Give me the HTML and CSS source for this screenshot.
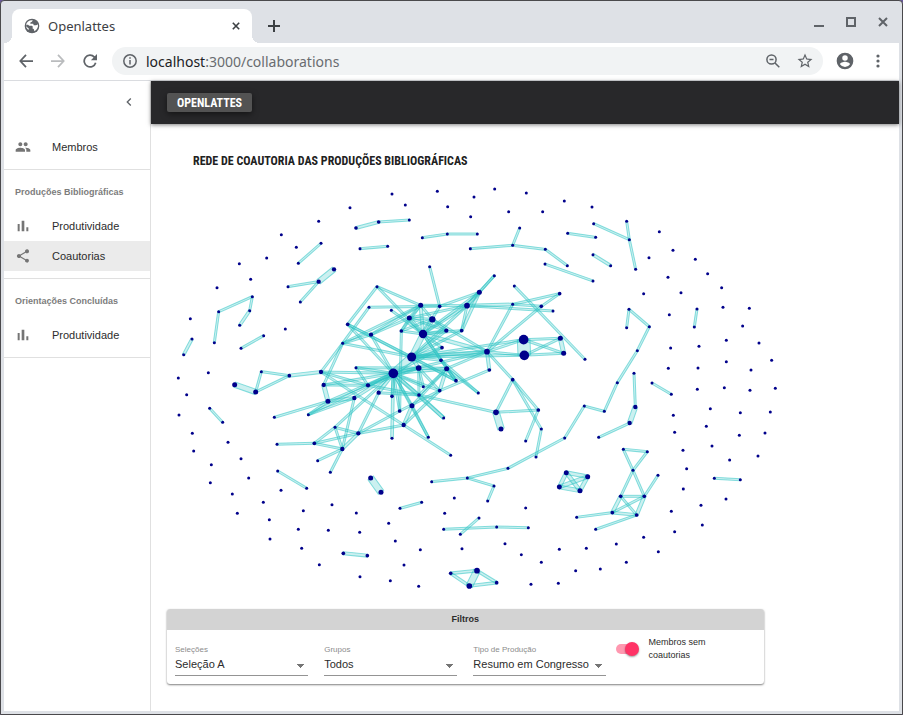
FILE: index.html
```html
<!DOCTYPE html>
<html lang="pt-BR">
<head>
<meta charset="utf-8">
<title>Openlattes</title>
<link rel="stylesheet" href="styles.css">
</head>
<body>
<div class="window">
  <div class="tabstrip">
    <div class="tab">
      <svg class="globe" viewBox="0 0 24 24"><circle cx="12" cy="12" r="11" fill="#5f6368"/><path fill="#fff" d="M13 3.500c-.5 1.500-.5 2-2 2.500-1.500.4-1.500 1-1.500 2.500h3.500c1 0 1.500 1 1.500 2.500h3c1.500 0 2.500-.5 3.400-1.500.8 4.500-1.400 8.500-5.400 10.200l-.5-2.200c0-1-.8-1.500-2-1.500v-3c0-1-.8-1.500-1.800-1.500H8.500c-1 0-1.500-1-2.500-1.500H3.300c-.1 1 0 2 .3 3l3.400 2.500v2.500C5 17 2.500 14 3 10.500 3.800 6 8 3 13 3.500z"/></svg>
      <span class="tab-title">Openlattes</span>
      <button class="icon-btn tab-close" aria-label="Fechar aba"><svg viewBox="0 0 10 10"><path d="M1 1l8 8M9 1L1 9"/></svg></button>
    </div>
    <button class="icon-btn new-tab" aria-label="Nova aba"><svg viewBox="0 0 12 12"><path d="M6 0v12M0 6h12"/></svg></button>
    <div class="window-controls">
      <button class="icon-btn" aria-label="Minimizar"><svg viewBox="0 0 12 12"><path d="M1 10h10"/></svg></button>
      <button class="icon-btn" aria-label="Maximizar"><svg viewBox="0 0 12 12"><path d="M2 2h8v8H2z"/></svg></button>
      <button class="icon-btn" aria-label="Fechar"><svg viewBox="0 0 12 12"><path d="M2 2l8 8M10 2l-8 8"/></svg></button>
    </div>
  </div>
  <div class="toolbar">
    <button class="icon-btn nav" aria-label="Voltar"><svg viewBox="0 0 16 16"><path d="M16 8H2M8 1L1.500 8 8 15"/></svg></button>
    <button class="icon-btn nav nav-off" aria-label="Avançar"><svg viewBox="0 0 16 16"><path d="M0 8h14M8 1l6.500 7L8 15"/></svg></button>
    <button class="icon-btn nav" aria-label="Recarregar"><svg viewBox="0 0 16 16"><path d="M14.500 10A6.700 6.700 0 1 1 13 3.500L14 5"/><path class="solid" d="M16 0v7H9z"/></svg></button>
    <div class="omnibox">
      <svg class="info" viewBox="0 0 14 14"><circle cx="7" cy="7" r="6.200"/><path d="M7 6v4.500M7 3.300v1.500"/></svg>
      <span class="url"><b>localhost</b>:3000/collaborations</span>
      <button class="icon-btn lens" aria-label="Zoom"><svg viewBox="0 0 14 14"><circle cx="5.500" cy="5.500" r="4.600"/><path d="M3.500 5.500h4M9 9l4.300 4.300"/></svg></button>
      <button class="icon-btn star" aria-label="Favoritar"><svg viewBox="0 0 24 24"><path class="solid" d="M22 9.240l-7.190-.62L12 2 9.190 8.630 2 9.240l5.460 4.730L5.820 21 12 17.270 18.180 21l-1.630-7.030L22 9.240zM12 15.400l-3.760 2.270 1-4.280-3.320-2.880 4.380-.38L12 6.100l1.710 4.040 4.380.38-3.320 2.880 1 4.280L12 15.400z"/></svg></button>
    </div>
    <button class="icon-btn person" aria-label="Perfil"><svg viewBox="0 0 24 24"><path class="solid" d="M12 2a10 10 0 1 0 0 20 10 10 0 0 0 0-20zm0 3a3.300 3.300 0 1 1 0 6.600A3.300 3.300 0 0 1 12 5zm0 14.200a7.200 7.200 0 0 1-6-3.200c0-2 4-3.100 6-3.100s6 1.100 6 3.100a7.200 7.200 0 0 1-6 3.200z"/></svg></button>
    <button class="icon-btn more" aria-label="Menu"><svg viewBox="0 0 4 14"><circle class="solid" cx="2" cy="2" r="1.600"/><circle class="solid" cx="2" cy="7" r="1.600"/><circle class="solid" cx="2" cy="12" r="1.600"/></svg></button>
  </div>
  <div class="app">
    <nav class="sidebar">
      <div class="collapse"><button class="icon-btn" aria-label="Recolher menu"><svg viewBox="0 0 24 24"><path class="solid" d="M15.410 7.410L14 6l-6 6 6 6 1.410-1.410L10.830 12z"/></svg></button></div>
      <div class="group first">
        <a class="item" href="#membros"><svg viewBox="0 0 24 24"><path d="M16 11c1.660 0 2.990-1.340 2.990-3S17.660 5 16 5s-3 1.340-3 3 1.340 3 3 3zm-8 0c1.660 0 2.990-1.340 2.990-3S9.660 5 8 5 5 6.340 5 8s1.340 3 3 3zm0 2c-2.330 0-7 1.170-7 3.500V19h14v-2.500C15 14.170 10.330 13 8 13zm8 0c-.29 0-.62.020-.97.050 1.160.84 1.970 1.970 1.970 3.450V19h6v-2.500c0-2.330-4.670-3.500-7-3.500z"/></svg>Membros</a>
      </div>
      <div class="group">
        <h2>Produções Bibliográficas</h2>
        <a class="item" href="#produtividade"><svg viewBox="0 0 24 24"><path d="M4 9h3v11H4zM10 4h4v16h-4zM17 14h3v6h-3z"/></svg>Produtividade</a>
        <a class="item active" href="#coautorias"><svg viewBox="0 0 24 24"><path d="M18 16.080c-.76 0-1.440.3-1.960.77L8.910 12.700a3.300 3.300 0 0 0 0-1.400l7.050-4.110A3 3 0 1 0 15.090 5.700L8.040 9.810a3 3 0 1 0 0 4.380l7.120 4.160A2.920 2.920 0 1 0 18 16.080z"/></svg>Coautorias</a>
      </div>
      <div class="group">
        <h2>Orientações Concluídas</h2>
        <a class="item" href="#orientacoes"><svg viewBox="0 0 24 24"><path d="M4 9h3v11H4zM10 4h4v16h-4zM17 14h3v6h-3z"/></svg>Produtividade</a>
      </div>
    </nav>
    <div class="page">
      <header class="appbar"><a class="brand" href="#inicio">OPENLATTES</a></header>
      <main class="content">
        <h1>REDE DE COAUTORIA DAS PRODUÇÕES BIBLIOGRÁFICAS</h1>
        <svg id="network" class="network" viewBox="-9 0 1790 1230" role="img" aria-label="Rede de coautoria"></svg>
        <section class="card">
          <h3>Filtros</h3>
          <form class="filters">
            <div class="field"><label for="selecao">Seleções</label><select id="selecao"><option>Seleção A</option></select></div>
            <div class="field"><label for="grupo">Grupos</label><select id="grupo"><option>Todos</option></select></div>
            <div class="field"><label for="tipo">Tipo de Produção</label><select id="tipo"><option>Resumo em Congresso</option></select></div>
            <div class="switch"><input type="checkbox" id="sem" checked><label for="sem">Membros sem coautorias</label></div>
          </form>
        </section>
      </main>
    </div>
  </div>
</div>
<script src="network.js"></script>
</body>
</html>
```
FILE: styles.css
```css
* { box-sizing: border-box; }

body {
  margin: 0;
  background: #6a5a9c;
  color: #2c2c2c;
  font-family: "Liberation Sans", Arial, sans-serif;
  font-size: 11px;
}

h1, h2, h3 { margin: 0; }
a { color: inherit; text-decoration: none; }

.window {
  display: flex;
  flex-direction: column;
  min-height: 100vh;
  padding: 0 3px 3px;
  border: 1px solid #4a494c;
  border-radius: 4px 4px 0 0;
  background: #dee1e6;
}

.icon-btn {
  display: flex;
  flex: none;
  align-items: center;
  justify-content: center;
  padding: 0;
  border: 0;
  background: none;
  color: #5f6368;
}

.icon-btn svg, .info {
  display: block;
  width: 100%;
  fill: none;
  stroke: currentColor;
  stroke-width: 2;
}

.icon-btn .solid { fill: currentColor; stroke: none; }

/* Browser tabs */
.tabstrip {
  display: flex;
  align-items: center;
  height: 42px;
  padding: 8px 6px 0 8px;
}

.tab {
  position: relative;
  display: flex;
  align-items: center;
  width: 240px;
  height: 34px;
  padding: 0 12px;
  border-radius: 8px 8px 0 0;
  background: #fff;
}

.tab::before, .tab::after {
  content: "";
  position: absolute;
  bottom: 0;
  width: 8px;
  height: 8px;
}

.tab::before { left: -8px; background: radial-gradient(circle at 0 0, #dee1e6 8px, #fff 8px); }
.tab::after { right: -8px; background: radial-gradient(circle at 100% 0, #dee1e6 8px, #fff 8px); }

.globe { width: 16px; height: 16px; }

.tab-title {
  flex: 1;
  padding-left: 8px;
  color: #3c4043;
  font: 13px "Noto Sans", sans-serif;
}

.tab-close { width: 8px; color: #3c4043; }
.new-tab { width: 12px; margin-left: 16px; color: #3c4043; }

.window-controls {
  display: flex;
  gap: 20px;
  margin: 0 4px 8px auto;
}

.window-controls .icon-btn { width: 12px; }

/* Browser toolbar */
.toolbar {
  display: flex;
  align-items: center;
  height: 38px;
  padding: 0 16px 1px 15px;
  border-bottom: 1px solid #dadce0;
  background: #fff;
}

.nav { width: 14px; margin-right: 18px; }
.nav-off { color: #babcbe; }

.omnibox {
  display: flex;
  flex: 1;
  align-items: center;
  height: 28px;
  margin-right: 12px;
  margin-left: -3px;
  padding: 0 9px 0 11px;
  border-radius: 14px;
  background: #f1f3f4;
}

.info { width: 14px; height: 14px; color: #5f6368; stroke-width: 1.5; }
.lens svg { stroke-width: 1.5; }

.url {
  flex: 1;
  padding-left: 9px;
  color: #696c70;
  font: 14px "Noto Sans", sans-serif;
}

.url b { color: #202124; font-weight: 400; }
.lens { width: 14px; }
.star { width: 18px; margin-left: 16px; }
.person { width: 20px; margin-right: 21px; }
.more { width: 4px; margin-right: 3px; }

/* Application */
.app {
  display: flex;
  flex: 1;
  background: #fff;
}

.sidebar {
  flex: none;
  width: 147px;
  border-right: 1px solid #e0e0e0;
}

.collapse {
  display: flex;
  align-items: center;
  justify-content: flex-end;
  height: 44px;
  padding: 0 13px 2px 0;
}

.collapse .icon-btn { width: 16px; }

.group {
  padding-bottom: 7px;
  border-bottom: 1px solid #e0e0e0;
}

.group.first { padding-top: 7px; }

.group h2 {
  height: 41px;
  padding: 4px 0 0 11px;
  color: #7c7c7c;
  font-size: 9px;
  line-height: 36px;
}

.item {
  display: flex;
  align-items: center;
  height: 30px;
  padding-left: 11px;
}

.item svg {
  width: 16px;
  height: 16px;
  margin-right: 21px;
  fill: #757575;
}

.active { background: #ebebeb; }

.page { flex: 1; min-width: 0; }

.appbar {
  display: flex;
  align-items: center;
  height: 43px;
  padding: 0 16px;
  background: #28282a;
  box-shadow: 0 1px 4px rgba(0, 0, 0, .5);
}

.brand {
  padding: 1px 10px 0;
  border-radius: 2px;
  background: #535353;
  box-shadow: 0 2px 6px rgba(0, 0, 0, .5);
  color: #fff;
  font: bold 12px/18px "Roboto Condensed", "Liberation Sans Narrow", Roboto, sans-serif;
}

.content {
  width: calc((100% - 32px) * 10 / 12);
  margin-left: 16px;
  padding: 27px 0 26px;
}

.content h1 {
  padding-left: 26px;
  color: #212121;
  font: bold 12px/20px "Roboto Condensed", "Liberation Sans Narrow", Roboto, sans-serif;
  white-space: nowrap;
}

.network {
  display: block;
  width: 100%;
  margin: 9px 0 19px;
  overflow: visible;
}

.edge {
  fill: rgba(47, 196, 196, .25);
  stroke: rgba(47, 196, 196, .55);
  stroke-width: 3px;
}

.node { fill: #00008b; }

/* Filters */
.card {
  overflow: hidden;
  border-radius: 3px;
  box-shadow: 0 1px 2px rgba(0, 0, 0, .5);
}

.card h3 {
  background: #d3d3d3;
  font-size: 9px;
  line-height: 21px;
  text-align: center;
}

.filters {
  display: grid;
  grid-template-columns: repeat(4, 1fr);
  padding-bottom: 8px;
}

.field { padding: 14px 8px 0; }

.field label {
  display: block;
  color: #8c8c8c;
  font-size: 8px;
  line-height: 12px;
}

.field select {
  width: 100%;
  height: 20px;
  padding: 0 0 2px;
  border: 0;
  border-bottom: 1px solid #949494;
  border-radius: 0;
  appearance: none;
  background:
    linear-gradient(to bottom left, #757575 50%, transparent 51%) right 7px top 8px / 4px 4px no-repeat,
    linear-gradient(to bottom right, #757575 50%, transparent 51%) right 4px top 8px / 4px 4px no-repeat;
  color: #2c2c2c;
  font: 11px "Liberation Sans", Arial, sans-serif;
}

.switch {
  display: flex;
  align-items: flex-start;
  padding: 6px 32px 0 2px;
}

.switch input {
  position: relative;
  flex: none;
  width: 20px;
  height: 10px;
  margin: 8px 12px 0 0;
  border-radius: 5px;
  appearance: none;
  background: #ff98b0;
}

.switch input::after {
  content: "";
  position: absolute;
  top: -2px;
  right: -3px;
  width: 14px;
  height: 14px;
  border-radius: 50%;
  background: #ff3366;
  box-shadow: 0 1px 2px rgba(0, 0, 0, .4);
}

.switch label { font-size: 9px; line-height: 13px; }
```
FILE: network.js
```js
// Members without co-authors: x,y pairs.
const isolated = `540,83 446,124 334,164 379,202 290,234 208,251 242,298 141,323 61,416 346,447 115,578 25,594
666,42 802,34 706,75 912,51 833,80 974,27 1069,39 1183,63 902,110 1016,95 1118,95
1266,81 1468,155 1509,211 1437,233 1576,238 1494,292 1613,281 1655,323 1421,341 1533,338 1498,404 1659,382 1738,385 1718,438 1502,504 1587,499 1669,481 1767,489 1805,541 1669,545 1495,565 1584,564 1743,570 1582,628 1663,623 1740,631 1816,625
50,644 27,705 67,760 174,787 71,813 213,836 124,854 236,894 121,908 187,942 333,931 280,967 202,1000 298,1019 400,992 486,974 559,999 385,1048 475,1051 569,1057 300,1077 395,1105 448,1154 570,1190
853,954 824,1000 1067,984 656,1030 676,1083 751,1109 876,1106 1005,1091 1054,1124 702,1155 661,1202 746,1219 1114,1147 1168,1108 1217,1172 1083,1213 1165,1210
1510,706 1621,686 1711,698 1801,696 1514,757 1609,739 1708,766 1785,759 1539,811 1626,798 1679,840 1764,828 1550,866 1540,927 1668,957 1593,976 1504,994 1597,1035 1514,1055 1421,1072 1339,1092 1249,1105 1465,1115 1369,1147 1291,1167`;

// Members with co-authors: id:x,y[,radius].
const linked = `a1:453,190 a2:385,250 a3:492,268,6 a4:446,305,6 a5:354,320 a6:391,366
b1:247,350 b2:146,395 b3:133,488 b4:239,392 b5:209,436 c1:66,477 c2:41,524 d1:281,467 d2:213,505
e1:274,575 e2:358,587,5 e3:453,576,6 e4:194,614,7 e5:257,636,7
f1:558,144,5 f2:626,126,5 f3:718,120 g1:570,206 g2:653,199 h1:757,173 h2:832,162 h3:922,162
i1:901,206 i2:1028,196 i3:1049,144 i4:1126,208 i5:1192,257 j1:1125,252 j2:1269,303 k1:1193,160 k2:1277,172
l1:1271,131 l2:1378,179 l3:1370,124 l4:1397,268 m1:1269,224 m2:1322,257 n1:1581,387 n2:1573,441
o1:1370,443 o2:1377,388 o3:1438,440 o4:1402,512 o5:1342,608 o6:1303,694 o7:1243,678 o8:1184,774 o9:1014,865 o10:892,894 o11:785,905 o12:972,918 o13:953,963
p1:1392,580 p2:1396,681,6 p3:1379,729,6 p4:1286,772 q1:1446,609 q2:1504,643 r1:119,685 r2:158,727
t1:323,873 t2:410,925 u1:602,894,7 u2:633,937,7 v1:690,985 v2:755,967
w1:821,1048 w2:980,1041 w3:1075,1043 x1:927,1014 x2:871,1063
y1:842,1180,5 y2:921,1172,8 y3:898,1218,8 y4:980,1208,5 z1:520,1120,5 z2:592,1127,5
A1:1360,808 A2:1432,815 A3:1389,871 A4:1352,949,5 A5:1423,949,5 A6:1464,886 A7:1327,998,5 A8:1400,1005,5 A9:1220,1012 A10:1277,1048
B1:1189,878,7 B2:1168,921,7 B3:1230,932,7 B4:1253,890,7 C1:1633,895 C2:1711,899
K1:621,320 K2:779,260 K3:973,287 K4:928,337,7 K5:891,377,8 K6:752,376,7 K7:809,379,5 K8:597,382 K9:664,391 K10:718,414,7 K11:787,418,9 K12:694,453,5 K13:759,462,12 K14:829,452,6 K15:875,452,5
K16:533,433,5 K17:603,464,6 K18:518,490 K19:816,503,5 K20:725,531,13 K21:813,541,5 K22:746,564,8 K23:830,566,7 K24:670,580,14 K25:951,515,8 K26:958,570,5 K27:858,602,5 K28:760,620 K29:809,632,5
K30:1033,318 K31:1169,341,5 K32:1114,379,5 K33:1028,373 K34:1149,393 K35:1061,479,14 K36:1063,526,14 K37:1171,475,7 K38:1181,520,7 K39:1028,599,5 K40:1245,538
K41:558,563 K42:461,615,6 K43:594,616,6 K44:474,664,7 K45:553,654,6 K46:415,704 K47:313,712 K48:495,742 K49:565,760,6 K50:433,790,5 K51:517,807,6 K52:321,793 K53:443,842 K54:481,877
K55:626,638,6 K56:666,649,5 K57:747,645,5 K58:689,693,5 K59:726,677,7 K60:701,735,6 K61:821,714 K62:775,772 K63:666,775 K64:842,826 K65:925,639 K66:978,697,8 K67:993,747,7 K68:1105,690,5 K69:1114,747 K70:1067,783 K71:1098,831`;

// Collaborations: from-to[:width].
const edges = `a1-a2 a3-a4:16 a4-a5 a4-a6 b1-b2 b2-b3 b1-b4 b4-b5:8 c1-c2:8 d1-d2 e1-e2 e2-e3:9 e1-e5 e2-e5 e4-e5:16
f1-f2:8 f2-f3 g1-g2 h1-h2 h2-h3 i1-i2 i2-i3 i2-i4 i4-i5 j1-j2 k1-k2 l1-l2 l2-l3 l2-l4 m1-m2:8 n1-n2
o1-o2 o2-o3 o3-o4 o4-o5 o5-o6 o6-o7 o7-o8 o8-o9 o9-o10 o10-o11 o10-o12 o12-o13
p1-p2 p2-p3:14 p3-p4 q1-q2 r1-r2 t1-t2 u1-u2:20 v1-v2 w1-w2 w2-w3 x1-x2
y1-y2:8 y1-y3:8 y2-y3:20 y2-y4:8 y3-y4:8 z1-z2:9
A1-A2 A1-A3 A2-A3 A3-A4 A3-A5 A4-A5 A4-A7:10 A4-A8 A5-A6 A5-A7 A5-A8:10 A7-A8:8 A7-A9 A8-A10
B1-B2:11 B1-B3:11 B1-B4:11 B2-B3:11 B2-B4:11 B3-B4:11 C1-C2
K1-K16 K1-K6 K1-K13 K2-K7 K3-K4 K3-K5 K4-K5:10 K4-K7 K4-K15:8 K4-K13 K5-K33:8 K5-K34 K5-K6 K5-K15 K5-K10 K5-K13 K5-K20
K8-K7 K8-K18 K9-K13 K6-K11 K6-K13:9 K6-K10 K6-K12 K17-K6 K17-K10 K17-K24 K18-e3 K18-K42 K18-K20 K18-K17 K18-K6 K16-K20 K16-K24
K30-K40 K33-K31 K33-K32 K33-K25 K31-K32 K32-K25 K25-K35 K25-K36 K25-K26:9 K25-K39 K25-K13:10 K25-K20:9 K25-K24 K25-K23 K25-K11
K35-K36:38 K35-K37 K35-K38 K36-K37 K36-K38 K37-K38:12 K20-K36 K20-K35 K39-K66 K39-K68 K39-K69 K66-K68 K66-K67:20 K68-K70 K69-K71 K57-K66
K13-K11:14 K13-K10:10 K13-K12 K13-K14 K13-K20:16 K13-K19 K13-K21 K13-K27 K13-K15 K10-K11 K10-K14 K10-K12 K11-K14 K12-K58 K12-K11
K20-K24:22 K20-K22:10 K20-K19 K20-K14 K20-K15 K20-K21 K20-K25 K20-K27 K7-K13 K19-K24 K21-K27 K21-K65
K24-e3 K24-K41 K24-K42 K24-K43:8 K24-K44 K24-K45:8 K24-K46 K24-K55:9 K24-K56 K24-K58 K24-K63:8 K24-K59 K24-K57:8 K24-K61:9 K24-K62 K24-K22:9 K24-K23:8 K24-K28 K24-K29 K24-K48
K47-K44 K44-K45:9 K46-K45 K46-K44 K45-K51 K44-K42:12 K42-K43 K48-K49 K48-K51 K50-K48 K50-K52 K50-K49 K50-K51 K51-K49:8 K51-K53 K51-K54 K49-K55 K49-K60 K49-K58 e3-K43 e3-K60 K60-K64
K41-K43 K41-K22 K22-K23:8 K22-K29 K22-K28 K22-K57 K22-K43 K23-K27 K23-K29:9 K23-K57 K23-K65 K26-K29 K29-K58 K59-K60:9 K59-K62 K29-K60 K57-K61:9 K57-K43 K57-K55 K59-K23 K16-K27`;

const svg = document.getElementById("network");
const nodes = {};

function add(tag, attributes) {
  const element = document.createElementNS("http://www.w3.org/2000/svg", tag);
  for (const name in attributes) element.setAttribute(name, attributes[name]);
  svg.appendChild(element);
}

linked.split(/\s+/).forEach(entry => {
  const [id, values] = entry.split(":");
  nodes[id] = values.split(",").map(Number);
});

edges.split(/\s+/).forEach(entry => {
  const [pair, width] = entry.split(":");
  const [from, to] = pair.split("-").map(id => nodes[id]);
  const dx = to[0] - from[0];
  const dy = to[1] - from[1];
  const w = Number(width || 6);
  add("rect", {
    class: "edge", x: 0, y: -w / 2, width: Math.hypot(dx, dy), height: w,
    transform: `translate(${from[0]} ${from[1]}) rotate(${Math.atan2(dy, dx) * 180 / Math.PI})`
  });
});

isolated.split(/\s+/).forEach(entry => {
  const [cx, cy] = entry.split(",");
  add("circle", { class: "node", cx, cy, r: 4.5 });
});

Object.values(nodes).forEach(([cx, cy, r]) => add("circle", { class: "node", cx, cy, r: r ? r + 0.5 : 4.5 }));
```
